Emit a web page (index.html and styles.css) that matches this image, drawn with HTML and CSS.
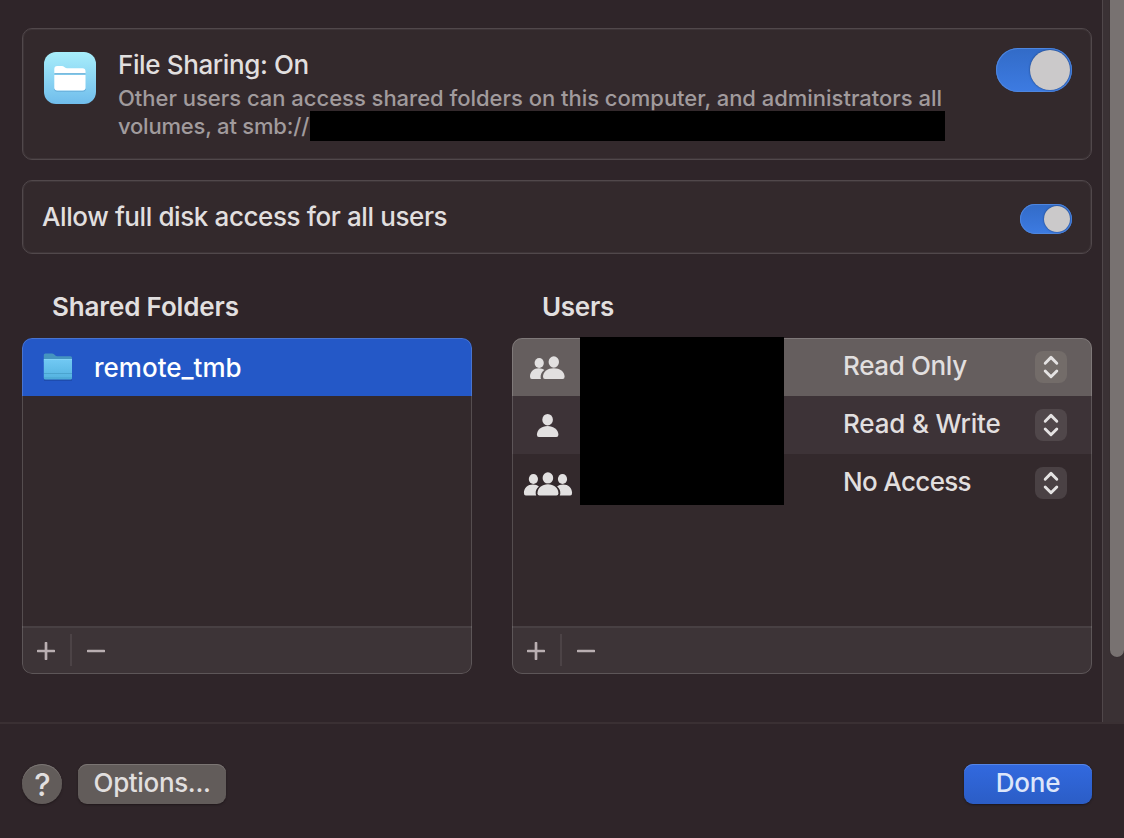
FILE: index.html
```html
<!DOCTYPE html>
<html lang="en">
<head>
<meta charset="utf-8">
<title>File Sharing</title>
<link rel="stylesheet" href="styles.css">
</head>
<body>
<svg class="defs" width="0" height="0" aria-hidden="true">
  <symbol id="chevrons" viewBox="0 0 32 32"><path d="M10.200 12.200 16 6.400l5.800 5.800M10.200 20l5.800 5.800 5.800-5.800" fill="none" stroke="#e4e2e2" stroke-width="2.900" stroke-linecap="round" stroke-linejoin="round"/></symbol>
  <symbol id="plus" viewBox="0 0 18 18"><path d="M9 1v16M1 9h16" fill="none" stroke="#b9aeb1" stroke-width="2.700" stroke-linecap="round"/></symbol>
  <symbol id="minus" viewBox="0 0 18 18"><path d="M1 9h16" fill="none" stroke="#b9aeb1" stroke-width="2.700" stroke-linecap="round"/></symbol>
</svg>
<main class="window">
  <div class="scroll-area">
    <div class="content">
      <section class="card service">
        <svg class="app-icon" viewBox="0 0 52 52">
          <defs><linearGradient id="sky" x1="0" y1="0" x2="0" y2="1"><stop offset="0" stop-color="#a8eefb"/><stop offset="1" stop-color="#70bdec"/></linearGradient></defs>
          <rect width="52" height="52" rx="12" fill="url(#sky)"/>
          <path d="M10.500 37q0 2.200 2.500 2.200h26q2.500 0 2.500-2.200" fill="none" stroke="#5799c9" opacity=".6"/>
          <path d="M10.300 21.200V17q0-3 3-3h4.500q1.500 0 2.500 1l.7.6q.8.700 2 .700h15.500q3 0 3 3v1.900z" fill="#fff"/>
          <path d="M10.500 21.800h31" stroke="#6fb0d8" stroke-width="1.200"/>
          <path d="M10.300 23h31.200v12.500q0 3-3 3H13.300q-3 0-3-3z" fill="#fff"/>
        </svg>
        <div class="service-text">
          <h1 class="service-title"><span class="t-title">File Sharing: On</span></h1>
          <p class="description"><span class="t-desc1">Other users can access shared folders on this computer, and administrators all</span><span class="address"><span class="t-desc2">volumes, at smb://</span><span class="redacted-address"></span></span></p>
        </div>
        <div class="switch switch-large"><span class="knob"></span></div>
      </section>
      <section class="card access">
        <span class="t-allow">Allow full disk access for all users</span>
        <div class="switch switch-small"><span class="knob"></span></div>
      </section>
      <div class="lists">
        <section class="column folders">
          <h2 class="heading"><span class="t-folders">Shared Folders</span></h2>
          <div class="list">
            <div class="rows">
              <div class="row folder-row">
                <svg class="folder-icon" viewBox="0 0 30 30">
                  <defs><linearGradient id="folder" x1="0" y1="0" x2="0" y2="1"><stop offset="0" stop-color="#72c9f4"/><stop offset="1" stop-color="#53b2df"/></linearGradient></defs>
                  <path d="M1 28h28" stroke="#183f91" stroke-width="1.500" opacity=".6"/>
                  <path d="M.8 3q0-1.500 1.500-1.500H9q1.200 0 2 .8l1.300 1.200q.8.700 2 .7h13.200q1.500 0 1.500 1.500V10H.8z" fill="#4594bf"/>
                  <path d="M.8 7H29v19q0 1.500-1.500 1.500h-25Q.8 27.500.8 26z" fill="url(#folder)"/>
                  <path d="M1 7.500h28" stroke="#83d2f5"/><path d="M1 21.500h28M1 26h28" stroke="#439bc5" stroke-width=".7"/>
                </svg>
                <span class="t-remote">remote_tmb</span>
              </div>
            </div>
            <div class="toolbar"><svg class="tool"><use href="#plus"/></svg><span class="separator"></span><svg class="tool"><use href="#minus"/></svg></div>
          </div>
        </section>
        <section class="column users">
          <h2 class="heading"><span class="t-users">Users</span></h2>
          <div class="list">
            <div class="rows">
              <div class="row selected">
                <svg class="people" viewBox="0 0 68 58">
                  <g fill="#e2e0e0"><ellipse cx="27.200" cy="25" rx="4.600" ry="5"/><path d="M18 38.500c0-5 4-8.300 8.800-8.300 2.300 0 4.200.7 5.500 1.800-2.500 2-3.800 4.400-3.700 7.500 0 .5.200 1 .5 1.500H19.800q-1.800 0-1.800-2.500z"/><ellipse cx="41.800" cy="24" rx="5.200" ry="5.700"/><path d="M31 38.800c0-5.200 4.800-8.600 10.700-8.600s10.900 3.400 10.900 8.600q0 2.200-2 2.200H33q-2 0-2-2.200z"/></g>
                </svg>
                <span class="permission"><span class="t-ro">Read Only</span></span><svg class="stepper"><use href="#chevrons"/></svg>
              </div>
              <div class="row alternate">
                <svg class="people" viewBox="0 0 68 58">
                  <g fill="#e2e0e0"><ellipse cx="35.600" cy="23.700" rx="5.300" ry="5.800"/><path d="M24.900 38.800c0-5.300 4.800-8.800 10.700-8.800s10.800 3.500 10.800 8.800q0 2.200-2 2.200H26.900q-2 0-2-2.200z"/></g>
                </svg>
                <span class="permission"><span class="t-rw">Read &amp; Write</span></span><svg class="stepper"><use href="#chevrons"/></svg>
              </div>
              <div class="row">
                <svg class="people" viewBox="0 0 68 58">
                  <g transform="translate(.9)" fill="#e2e0e0"><ellipse cx="20.500" cy="25" rx="4.600" ry="5.100"/><ellipse cx="49.600" cy="25" rx="4.600" ry="5.100"/><path d="M11 39c0-5.200 4-8.500 9-8.500 2.600 0 4.700.8 6 1.900-2.300 1.800-3.500 4.300-3.200 7.200q.1.900.5 1.900H13q-2 0-2-2.500zM59.200 39c0-5.200-4-8.500-9-8.500-2.600 0-4.700.8-6 1.900 2.300 1.800 3.500 4.300 3.200 7.200q-.1.900-.5 1.900h10.300q2 0 2-2.500z"/><ellipse cx="35" cy="24" rx="5.300" ry="5.800"/><path d="M24.600 39.200c0-5.300 4.600-8.900 10.400-8.900s10.500 3.600 10.500 8.900q0 2.300-2 2.300H26.600q-2 0-2-2.300z" stroke="#33292c" stroke-width="1.500" paint-order="stroke"/></g>
                </svg>
                <span class="permission"><span class="t-na">No Access</span></span><svg class="stepper"><use href="#chevrons"/></svg>
              </div>
            </div>
            <div class="toolbar"><svg class="tool"><use href="#plus"/></svg><span class="separator"></span><svg class="tool"><use href="#minus"/></svg></div>
            <div class="redacted-users"></div>
          </div>
        </section>
      </div>
    </div>
    <div class="scrollbar"><div class="thumb"></div></div>
  </div>
  <footer class="footer">
    <div class="help"><span>?</span></div>
    <div class="button options"><span class="t-options">Options...</span></div>
    <div class="button done"><span class="t-done">Done</span></div>
  </footer>
</main>
</body>
</html>
```
FILE: styles.css
```css
* { box-sizing: border-box; }
body {
  margin: 0;
  background: #2f2529;
  color: #e1dfdf;
  font: 450 26px/32px Inter, "Liberation Sans", sans-serif;
}
h1, h2, p { margin: 0; font-size: inherit; font-weight: inherit; }
span { white-space: nowrap; }
svg { display: block; flex: none; }
.defs { position: absolute; }
.window { display: flex; flex-direction: column; width: 1124px; height: 838px; overflow: hidden; }
.scroll-area { display: flex; height: 722px; }
.content { width: 1102px; padding: 28px 10px 0 22px; display: flex; flex-direction: column; gap: 20px; }

.card { display: flex; background: #33292c; border: 1px solid #51484b; box-shadow: inset 0 0 0 1px #3d3437; border-radius: 10px; }
.service { height: 132px; padding: 19px 19px 0 21px; }
.app-icon { width: 52px; height: 52px; margin-top: 4px; }
.service-text { width: 830px; margin-left: 22px; }
.service-title { height: 35px; padding-top: 1px; font-weight: 500; }
.description { display: flex; flex-direction: column; color: #a19b9d; font-size: 22px; line-height: 28px; font-weight: 500; }
.t-title { letter-spacing: -0.38px; }
.t-desc1 { line-height: 30px; height: 28px; letter-spacing: -0.02px; }
.t-desc2 { line-height: 30px; width: 192px; letter-spacing: -0.2px; }
.t-allow { letter-spacing: -0.4px; }
.t-folders { letter-spacing: -0.15px; }
.t-users { letter-spacing: -0.3px; }
.t-ro { letter-spacing: -0.36px; }
.t-rw { letter-spacing: -0.18px; }
.t-na { letter-spacing: -0.65px; }
.t-options { letter-spacing: -0.35px; }
.t-done { letter-spacing: -0.2px; }
.t-remote { padding-top: 2px; }
.address { display: flex; height: 30px; }
.redacted-address { width: 635px; height: 30px; background: #000; }
.access { height: 74px; padding: 0 19px; align-items: center; font-weight: 500; }

.switch { display: flex; justify-content: flex-end; align-items: center; margin-left: auto; padding: 2px; border-radius: 22px; background: linear-gradient(#326bc7, #3d7be2); box-shadow: inset 0 0 0 1px #4e86df; }
.switch-large { width: 76px; height: 44px; }
.switch-small { width: 52px; height: 30px; margin-top: 3px; }
.knob { width: 40px; height: 40px; border-radius: 50%; background: #cbc9ca; box-shadow: 0 0 2px #17386f; }
.switch-small .knob { width: 26px; height: 26px; }

.lists { display: flex; gap: 40px; padding-top: 16px; }
.folders { width: 450px; }
.users { width: 580px; }
.heading { height: 48px; padding: 1px 0 0 30px; font-weight: 600; }
.list { position: relative; display: flex; flex-direction: column; height: 336px; border-radius: 10px; background: #33292c; overflow: hidden; }
.list::after { content: ""; position: absolute; inset: 0; border: 1px solid rgb(255 255 255 / 17%); border-radius: 10px; }
.rows { flex: 1; }
.row { display: flex; align-items: center; height: 58px; }
.folder-row { padding-left: 21px; gap: 21px; background: #2458c7; color: #fff; font-weight: 500; }
.folder-icon { width: 30px; height: 30px; }
.selected { background: #655e5e; }
.alternate { background: #3d3337; }
.people { width: 68px; height: 58px; }
.permission { width: 192px; margin-left: 263px; padding-bottom: 2px; }
.stepper { width: 32px; height: 32px; border-radius: 8px; background: #4a4144; }
.alternate .stepper { background: #50474a; }
.selected .stepper { background: #736c69; }
.toolbar { display: flex; align-items: center; height: 48px; padding: 0 0 1px 15px; background: #3d3437; border-top: 2px solid #484043; }
.tool { width: 18px; height: 18px; }
.separator { width: 2px; height: 32px; margin: 0 15px 1px; background: #4c4346; }
.redacted-users { position: absolute; z-index: 1; left: 68px; top: -1px; width: 204px; height: 168px; background: #000; }
.users .list { overflow: visible; }
.selected { border-radius: 10px 10px 0 0; }
.users .toolbar { border-radius: 0 0 10px 10px; }

.scrollbar { display: flex; justify-content: flex-end; width: 22px; background: #3a3134; border-left: 1px solid #50474a; }
.thumb { width: 14px; height: 657px; border-radius: 0 0 7px 7px; background: #787271; box-shadow: 0 0 1px #292023; }

.footer { display: flex; height: 116px; padding: 40px 32px 0 22px; border-top: 2px solid #3a3033; }
.help, .button { display: flex; justify-content: center; height: 40px; background: #625c5a; box-shadow: inset 0 1px #7b7573, 0 1px 2px #20181b; }
.help { width: 40px; border-radius: 50%; font-size: 31px; line-height: 41px; padding-left: 1px; }
.button { border-radius: 9px; line-height: 37px; }
.options { width: 148px; margin-left: 16px; }
.done { width: 128px; margin-left: auto; background: linear-gradient(#3269df, #2b5dc6); box-shadow: inset 0 1px #5585e6, 0 1px 2px #1b171f; color: #dde6fa; }
```
